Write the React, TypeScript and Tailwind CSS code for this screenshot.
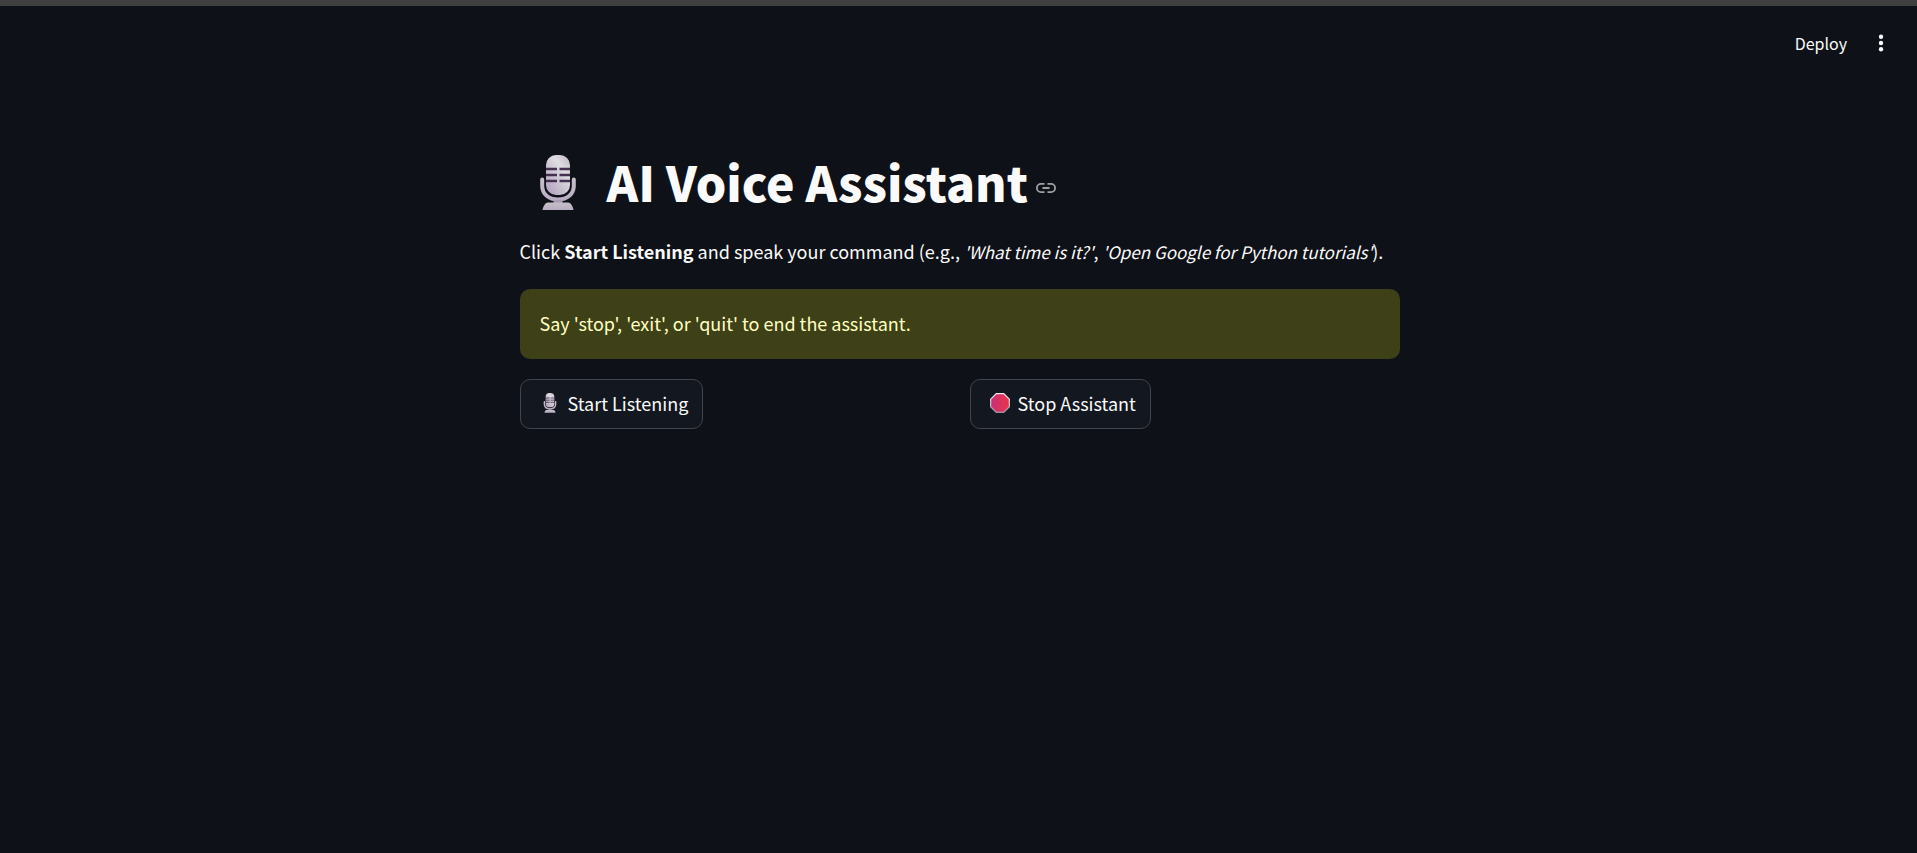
import React, { useId } from "react";

function Microphone({ className }: { className: string }) {
  const id = useId();
  const body = `${id}-body`;
  const stand = `${id}-stand`;
  return (
    <svg viewBox="0 0 36 56" className={className} aria-hidden="true">
      <defs>
        <linearGradient id={body} x1="1" y1="0" x2="0.2" y2="1">
          <stop offset="0" stopColor="#bdb7c0" />
          <stop offset="0.35" stopColor="#dfdce2" />
          <stop offset="1" stopColor="#b3a6bf" />
        </linearGradient>
        <linearGradient id={stand} x1="0" y1="0" x2="0" y2="1">
          <stop offset="0" stopColor="#c5c0c8" />
          <stop offset="1" stopColor="#b9adc3" />
        </linearGradient>
      </defs>
      <path
        d="M2.2 24.500V31c0 8 6.500 13.400 15.800 13.400S33.800 39 33.800 31v-6.500"
        fill="none"
        stroke={`url(#${stand})`}
        strokeWidth="4"
        strokeLinecap="round"
      />
      <path d="M13.500 45h9v3h-9z" fill="#a79bb0" />
      <path d="M8 47.500h20c3 0 5 4.500 5.500 7.500h-31c.500-3 2.500-7.500 5.500-7.500z" fill={`url(#${stand})`} />
      <rect x="6" y="0" width="24" height="40" rx="10" fill={`url(#${body})`} />
      <path
        d="M6 14h11M19.500 14H30M6 20h11M19.500 20H30M6 26h11M19.500 26H30"
        stroke="#46304f"
        strokeWidth="2.400"
      />
    </svg>
  );
}

function StopSign({ className }: { className: string }) {
  const id = useId();
  return (
    <svg viewBox="0 0 20 20" className={className} aria-hidden="true">
      <defs>
        <linearGradient id={id} x1="0" y1="0" x2="1" y2="0">
          <stop offset="0" stopColor="#cb3077" />
          <stop offset="1" stopColor="#e8344a" />
        </linearGradient>
        <linearGradient id={`${id}-rim`} x1="0" y1="0" x2="0" y2="1">
          <stop offset="0" stopColor="#eeeaf0" />
          <stop offset="1" stopColor="#9b90a3" />
        </linearGradient>
      </defs>
      <path d="M6 0h8l6 6v8l-6 6H6l-6-6V6z" fill={`url(#${id}-rim)`} />
      <path d="M6.500 1.300h7l5.200 5.200v7l-5.200 5.200h-7l-5.200-5.200v-7z" fill={`url(#${id})`} />
    </svg>
  );
}

function LinkIcon() {
  return (
    <svg
      viewBox="0 0 24 24"
      className="size-6"
      fill="none"
      stroke="currentColor"
      strokeWidth="1.800"
      aria-hidden="true"
    >
      <path d="M10.500 7.900H7a4.100 4.100 0 0 0 0 8.200h3.500M13.500 7.900H17a4.100 4.100 0 0 1 0 8.200h-3.500M8.500 12h7" />
    </svg>
  );
}

const buttonClass =
  "flex h-[50px] items-center rounded-[10px] border border-[#41444c] bg-[#131720] pr-3.5 pb-0.5 text-lg whitespace-nowrap";

export default function App() {
  return (
    <div className="min-h-screen border-t-[6px] border-[#404040] bg-[#0e1117] pl-0.5 font-['Noto_Sans_CJK_SC','Source_Sans_3',sans-serif] text-[#fafafa]">
      <header className="flex h-[76px] items-center justify-end gap-5 pr-[22px] pb-0.5">
        <button type="button" className="text-base">
          Deploy
        </button>
        <button type="button" aria-label="Main menu" className="p-1">
          <svg viewBox="0 0 20 20" className="size-5" fill="currentColor" aria-hidden="true">
            <circle cx="10" cy="3.700" r="2.200" />
            <circle cx="10" cy="10" r="2.200" />
            <circle cx="10" cy="16.300" r="2.200" />
          </svg>
        </button>
      </header>
      <main className="mx-auto w-full max-w-[880px] pt-[60px]">
        <div className="flex h-[82px] items-center">
          <h1 className="flex items-center text-[48px] leading-none font-black whitespace-nowrap">
            <Microphone className="mr-[31px] ml-5 h-14 w-9" />
            <span className="pb-1">AI Voice Assistant</span>
          </h1>
          <a href="#ai-voice-assistant" aria-label="Link to heading" className="mt-2.5 ml-1.5 text-[#a0a1a4]">
            <LinkIcon />
          </a>
        </div>
        <p className="mt-3 pb-0.5 text-lg leading-[30px]">
          Click <strong className="font-bold">Start Listening</strong> and speak your command (e.g.,{" "}
          <em className="text-[17px]">'What time is it?'</em>,{" "}
          <em className="text-[17px]">'Open Google for Python tutorials'</em>).
        </p>
        <div role="alert" className="mt-5 flex h-[70px] items-center rounded-[10px] bg-[#3e4017] px-5 pb-0.5 text-lg text-[#ffffc2]">
          Say 'stop', 'exit', or 'quit' to end the assistant.
        </div>
        <div className="mt-5 grid grid-cols-2 gap-5">
          <div>
            <button type="button" className={buttonClass}>
              <Microphone className="mr-[11px] ml-[22px] h-5 w-[14px]" />
              Start Listening
            </button>
          </div>
          <div>
            <button type="button" className={buttonClass}>
              <StopSign className="mr-2 ml-[19px] size-5" />
              Stop Assistant
            </button>
          </div>
        </div>
      </main>
    </div>
  );
}
